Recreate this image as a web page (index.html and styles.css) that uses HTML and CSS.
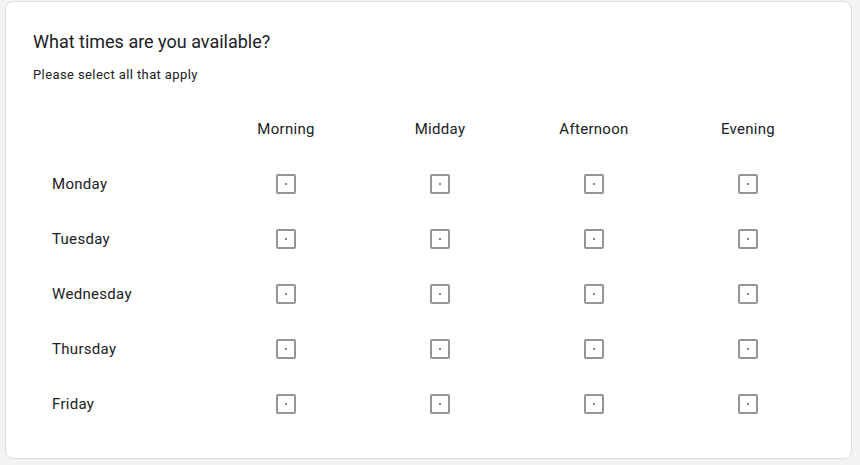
FILE: index.html
```html
<!DOCTYPE html>
<html>
<head>
<meta charset="utf-8">
<link rel="stylesheet" href="styles.css">
</head>
<body>
<div class="card">
  <div class="title">What times are you available?</div>
  <div class="subtitle">Please select all that apply</div>
  <div class="grid">
    <div class="corner"></div>
    <div class="colhead">Morning</div>
    <div class="colhead">Midday</div>
    <div class="colhead">Afternoon</div>
    <div class="colhead">Evening</div>

    <div class="rowhead">Monday</div>
    <div class="cell"><span class="box"></span></div>
    <div class="cell"><span class="box"></span></div>
    <div class="cell"><span class="box"></span></div>
    <div class="cell"><span class="box"></span></div>

    <div class="rowhead">Tuesday</div>
    <div class="cell"><span class="box"></span></div>
    <div class="cell"><span class="box"></span></div>
    <div class="cell"><span class="box"></span></div>
    <div class="cell"><span class="box"></span></div>

    <div class="rowhead">Wednesday</div>
    <div class="cell"><span class="box"></span></div>
    <div class="cell"><span class="box"></span></div>
    <div class="cell"><span class="box"></span></div>
    <div class="cell"><span class="box"></span></div>

    <div class="rowhead">Thursday</div>
    <div class="cell"><span class="box"></span></div>
    <div class="cell"><span class="box"></span></div>
    <div class="cell"><span class="box"></span></div>
    <div class="cell"><span class="box"></span></div>

    <div class="rowhead">Friday</div>
    <div class="cell"><span class="box"></span></div>
    <div class="cell"><span class="box"></span></div>
    <div class="cell"><span class="box"></span></div>
    <div class="cell"><span class="box"></span></div>
  </div>
</div>
</body>
</html>
```
FILE: styles.css
```css
html, body {
  margin: 0;
  padding: 0;
  background: #f3f3f3;
}
body {
  font-family: Roboto, "Liberation Sans", Arial, sans-serif;
  color: #202124;
}
.card {
  box-sizing: border-box;
  margin: 1px 0 0 5px;
  width: 847px;
  height: 458px;
  background: #ffffff;
  border: 1px solid #dadce0;
  border-radius: 8px;
  padding: 28px 0 0 27px;
}
.title {
  font-size: 18px;
  line-height: 24px;
  letter-spacing: 0;
  color: #202124;
}
.subtitle {
  margin-top: 13px;
  font-size: 13px;
  line-height: 16px;
  letter-spacing: 0.4px;
  color: #202124;
}
.grid {
  margin-top: 18px;
  display: grid;
  grid-template-columns: 176px repeat(4, 154px);
  grid-auto-rows: 55px;
}
.colhead {
  display: flex;
  align-items: center;
  justify-content: center;
  font-size: 15px;
  letter-spacing: 0.3px;
  color: #202124;
}
.rowhead {
  display: flex;
  align-items: center;
  padding-left: 19px;
  font-size: 15px;
  letter-spacing: 0.3px;
  color: #202124;
}
.cell {
  display: flex;
  align-items: center;
  justify-content: center;
}
.box {
  box-sizing: border-box;
  width: 20px;
  height: 20px;
  border: 2px solid #939699;
  border-radius: 2px;
  display: flex;
  align-items: center;
  justify-content: center;
}
.box::after {
  content: "";
  width: 2px;
  height: 2px;
  background: #80868b;
}
```
